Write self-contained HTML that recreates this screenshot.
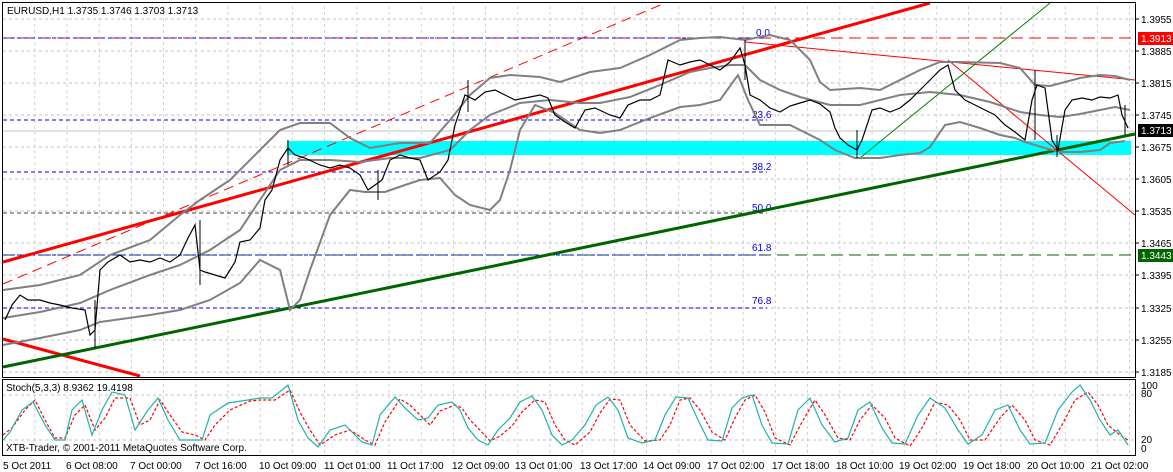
<!DOCTYPE html>
<html><head><meta charset="utf-8"><style>
html,body{margin:0;padding:0;background:#fff;width:1173px;height:472px;overflow:hidden}
svg{display:block;font-family:"Liberation Sans",sans-serif;font-size:10px}
</style></head><body>
<svg width="1173" height="472" viewBox="0 0 1173 472" xmlns="http://www.w3.org/2000/svg">
<defs>
<pattern id="vg" x="3" y="0" width="32.2" height="472" patternUnits="userSpaceOnUse">
<line x1="32" y1="0" x2="32" y2="472" stroke="#c0c0c0" stroke-dasharray="3,3"/>
</pattern>
</defs>
<rect x="0" y="0" width="1173" height="472" fill="#fff"/>
<rect x="3" y="3" width="1132" height="373" fill="url(#vg)"/>
<rect x="3" y="380" width="1132" height="74" fill="url(#vg)"/>
<g stroke="#c0c0c0" stroke-dasharray="3,3">
<line x1="3" y1="19" x2="1135" y2="19"/><line x1="3" y1="51" x2="1135" y2="51"/>
<line x1="3" y1="83" x2="1135" y2="83"/><line x1="3" y1="115" x2="1135" y2="115"/>
<line x1="3" y1="147" x2="1135" y2="147"/><line x1="3" y1="179" x2="1135" y2="179"/>
<line x1="3" y1="211" x2="1135" y2="211"/><line x1="3" y1="243" x2="1135" y2="243"/>
<line x1="3" y1="275" x2="1135" y2="275"/><line x1="3" y1="308" x2="1135" y2="308"/>
<line x1="3" y1="340" x2="1135" y2="340"/><line x1="3" y1="372" x2="1135" y2="372"/>
<line x1="3" y1="395" x2="1135" y2="395"/><line x1="3" y1="440" x2="1135" y2="440"/>
</g>
<rect x="287" y="141" width="844" height="14" fill="#00ffff"/>
<line x1="3" y1="131" x2="1135" y2="131" stroke="#c0c0c0"/>
<line x1="3" y1="38" x2="1135" y2="38" stroke="#ff0000" stroke-dasharray="12,6"/>
<line x1="3" y1="255" x2="1135" y2="255" stroke="#006400" stroke-dasharray="12,6"/>
<g stroke="#0000ff" stroke-dasharray="4,3">
<line x1="3" y1="38" x2="767" y2="38"/><line x1="3" y1="120" x2="767" y2="120"/>
<line x1="3" y1="172" x2="767" y2="172"/><line x1="3" y1="255" x2="767" y2="255"/>
<line x1="3" y1="308" x2="767" y2="308"/>
</g>
<line x1="3" y1="213" x2="767" y2="213" stroke="#404040" stroke-dasharray="4,3"/>
<g fill="#0000ff" font-size="10">
<text x="756" y="36">0.0</text><text x="752" y="118">23.6</text><text x="752" y="170">38.2</text>
<text x="752" y="211">50.0</text><text x="752" y="251">61.8</text><text x="752" y="304">76.8</text>
</g>
<line x1="3" y1="284" x2="665" y2="3" stroke="#ff0000" stroke-dasharray="10,6"/>
<line x1="3" y1="262" x2="930" y2="3" stroke="#ff0000" stroke-width="3"/>
<line x1="3" y1="339" x2="140" y2="376" stroke="#ff0000" stroke-width="3"/>
<line x1="3" y1="367" x2="1135" y2="134" stroke="#006400" stroke-width="3"/>
<line x1="745" y1="42" x2="1135" y2="80" stroke="#ff0000"/>
<line x1="948" y1="60" x2="1135" y2="215" stroke="#ff0000"/>
<line x1="860" y1="158" x2="1050" y2="3" stroke="#008000"/>
<g fill="none" stroke="#808080" stroke-width="2">
<polyline points="3,290 40,285 80,275 110,255 150,240 180,215 200,200 230,180 260,150 280,130 300,123 330,123 350,138 370,148 400,143 430,143 450,120 470,95 490,78 510,75 540,77 560,82 590,72 620,68 650,55 680,40 700,38 720,37 745,40 770,35 790,40 810,60 820,82 830,90 860,88 880,90 900,80 920,70 940,62 960,62 1000,63 1020,68 1035,85 1050,86 1080,78 1100,75 1115,76 1130,80"/>
<polyline points="3,318 40,312 80,303 110,290 150,275 180,265 210,250 240,230 260,200 280,170 300,160 330,160 360,162 390,158 420,158 450,150 470,130 490,115 520,103 550,100 580,103 600,103 630,97 660,85 690,72 710,68 730,65 745,65 760,80 780,90 800,97 830,105 860,105 880,100 900,95 930,92 960,95 990,102 1020,112 1040,115 1060,117 1080,114 1100,110 1115,107 1130,110"/>
<polyline points="3,345 40,338 80,330 100,322 150,315 180,310 210,300 240,283 260,260 280,270 290,310 300,300 310,270 330,215 350,190 365,192 385,192 405,185 420,180 440,178 455,195 470,205 490,210 500,200 510,170 520,130 535,105 555,113 580,130 600,133 620,130 650,118 680,107 700,105 720,100 738,75 748,100 760,125 790,125 820,140 835,150 855,158 880,158 900,155 920,153 930,147 945,125 960,122 980,128 1000,135 1015,138 1025,142 1045,148 1060,152 1080,152 1100,150 1110,143 1125,141"/>
</g>
<g stroke="#000" stroke-width="1.2" fill="none">
<polyline points="5,320 12,305 20,295 28,300 40,300 50,303 60,305 72,308 85,310 90,335 95,330 100,270 108,262 120,255 130,262 140,260 150,262 160,258 170,262 180,255 188,238 195,225 200,270 205,272 215,275 225,278 235,262 240,242 250,240 260,228 265,200 272,190 280,160 288,148 295,155 305,158 320,165 330,168 340,165 350,168 360,175 368,190 375,185 382,180 390,160 400,155 410,158 420,160 428,180 440,172 448,160 455,125 465,95 475,100 485,92 495,90 505,95 515,100 525,98 540,95 548,98 555,115 565,122 575,128 585,110 595,108 610,115 620,118 628,105 640,100 650,100 660,95 668,60 680,65 690,62 700,60 710,65 720,70 730,62 740,48 745,65 750,95 760,100 770,108 780,112 790,106 800,103 810,100 820,104 830,112 835,128 840,138 848,145 857,150 862,140 872,110 880,108 890,112 900,108 910,100 920,90 930,80 940,70 948,65 955,90 965,100 975,105 985,110 995,115 1005,125 1015,132 1025,140 1032,100 1037,85 1045,88 1052,140 1058,150 1065,110 1072,100 1082,98 1092,100 1100,97 1110,98 1118,95 1122,115 1128,128"/>
</g>
<g stroke="#000" stroke-width="1">
<line x1="95" y1="300" x2="95" y2="348"/><line x1="200" y1="220" x2="200" y2="285"/>
<line x1="288" y1="140" x2="288" y2="165"/><line x1="378" y1="170" x2="378" y2="200"/>
<line x1="468" y1="80" x2="468" y2="112"/><line x1="745" y1="40" x2="745" y2="80"/>
<line x1="857" y1="130" x2="857" y2="158"/><line x1="1035" y1="70" x2="1035" y2="140"/>
<line x1="1057" y1="135" x2="1057" y2="157"/><line x1="1125" y1="105" x2="1125" y2="135"/>
</g>
<rect x="2.5" y="2.5" width="1133" height="375" fill="none" stroke="#000"/>
<rect x="2.5" y="379.5" width="1133" height="76" fill="none" stroke="#000"/>
<polyline fill="none" stroke="#ff0000" stroke-width="1.2" stroke-dasharray="3,2" points="3,435 12,428 25,410 35,400 45,420 55,438 65,438 75,415 85,405 95,430 105,418 115,398 130,398 140,425 150,420 160,400 170,415 182,432 195,435 205,440 215,425 230,410 250,401 260,400 275,400 290,390 300,412 310,430 320,445 335,435 350,430 365,440 375,445 385,422 400,399 410,405 420,415 430,425 440,411 455,405 462,408 470,420 480,430 490,441 500,436 512,426 522,412 535,400 545,402 555,425 565,440 575,445 590,432 600,413 610,399 620,400 630,425 645,441 660,440 670,425 680,400 690,398 700,410 712,432 725,440 735,418 745,400 755,395 765,412 775,438 790,445 802,422 815,400 825,415 838,438 850,440 860,420 872,405 885,418 895,438 910,446 922,428 935,402 948,405 960,420 970,440 985,440 1000,418 1012,405 1025,420 1035,440 1050,445 1062,425 1075,400 1088,392 1098,405 1108,425 1120,435 1128,440"/>
<polyline fill="none" stroke="#20b2aa" stroke-width="1.2" points="3,440 10,432 22,410 33,402 45,425 55,440 65,440 72,410 82,400 92,435 102,410 112,392 125,395 135,430 148,410 158,398 168,420 180,440 192,440 202,440 210,415 228,403 248,400 260,398 272,398 288,385 298,420 308,438 318,447 330,430 345,425 362,442 372,445 380,415 395,397 405,408 418,420 428,418 438,405 452,402 460,410 468,428 478,440 488,445 498,430 510,418 520,402 532,396 542,410 552,435 562,445 572,440 585,425 596,405 608,397 618,410 628,438 642,443 655,440 665,415 676,397 688,398 698,420 708,440 722,441 732,408 742,398 752,395 762,425 772,443 788,444 798,410 810,398 822,425 835,442 848,438 858,410 870,402 882,428 892,443 905,444 918,415 930,398 945,408 958,430 968,444 982,435 995,410 1008,405 1020,430 1030,444 1045,443 1058,410 1072,392 1080,385 1090,400 1100,420 1110,435 1118,430 1128,445"/>
<text x="6" y="391" fill="#000">Stoch(5,3,3) 8.9362 19.4198</text>
<text x="6" y="451" fill="#000">XTB-Trader, © 2001-2011 MetaQuotes Software Corp.</text>
<text x="7" y="14" fill="#000">EURUSD,H1  1.3735 1.3746 1.3703 1.3713</text>
<g fill="#000">
<text x="1141" y="23">1.3955</text><text x="1141" y="55">1.3885</text><text x="1141" y="87">1.3815</text>
<text x="1141" y="119">1.3745</text><text x="1141" y="151">1.3675</text><text x="1141" y="183">1.3605</text>
<text x="1141" y="215">1.3535</text><text x="1141" y="247">1.3465</text><text x="1141" y="279">1.3395</text>
<text x="1141" y="312">1.3325</text><text x="1141" y="344">1.3255</text><text x="1141" y="376">1.3185</text>
<text x="1141" y="389">100</text><text x="1141" y="397">80</text><text x="1141" y="443">20</text><text x="1141" y="452">0</text>
</g>
<g stroke="#000">
<line x1="1135" y1="19" x2="1139" y2="19"/><line x1="1135" y1="51" x2="1139" y2="51"/><line x1="1135" y1="83" x2="1139" y2="83"/>
<line x1="1135" y1="115" x2="1139" y2="115"/><line x1="1135" y1="147" x2="1139" y2="147"/><line x1="1135" y1="179" x2="1139" y2="179"/>
<line x1="1135" y1="211" x2="1139" y2="211"/><line x1="1135" y1="243" x2="1139" y2="243"/><line x1="1135" y1="275" x2="1139" y2="275"/>
<line x1="1135" y1="308" x2="1139" y2="308"/><line x1="1135" y1="340" x2="1139" y2="340"/><line x1="1135" y1="372" x2="1139" y2="372"/>
</g>
<rect x="1138" y="32" width="35" height="13" fill="#ff0000"/><text x="1141" y="42" fill="#fff">1.3913</text>
<rect x="1138" y="124" width="35" height="13" fill="#000"/><text x="1141" y="134" fill="#fff">1.3713</text>
<rect x="1138" y="249" width="35" height="13" fill="#006400"/><text x="1141" y="259" fill="#fff">1.3443</text>
<g fill="#000">
<text x="3" y="469">5 Oct 2011</text><text x="66" y="469">6 Oct 08:00</text><text x="130" y="469">7 Oct 00:00</text>
<text x="195" y="469">7 Oct 16:00</text><text x="259" y="469">10 Oct 09:00</text><text x="324" y="469">11 Oct 01:00</text>
<text x="387" y="469">11 Oct 17:00</text><text x="452" y="469">12 Oct 09:00</text><text x="515" y="469">13 Oct 01:00</text>
<text x="580" y="469">13 Oct 17:00</text><text x="643" y="469">14 Oct 09:00</text><text x="707" y="469">17 Oct 02:00</text>
<text x="772" y="469">17 Oct 18:00</text><text x="836" y="469">18 Oct 10:00</text><text x="899" y="469">19 Oct 02:00</text>
<text x="963" y="469">19 Oct 18:00</text><text x="1027" y="469">20 Oct 10:00</text><text x="1091" y="469">21 Oct 02:00</text>
</g>
</svg>
</body></html>
